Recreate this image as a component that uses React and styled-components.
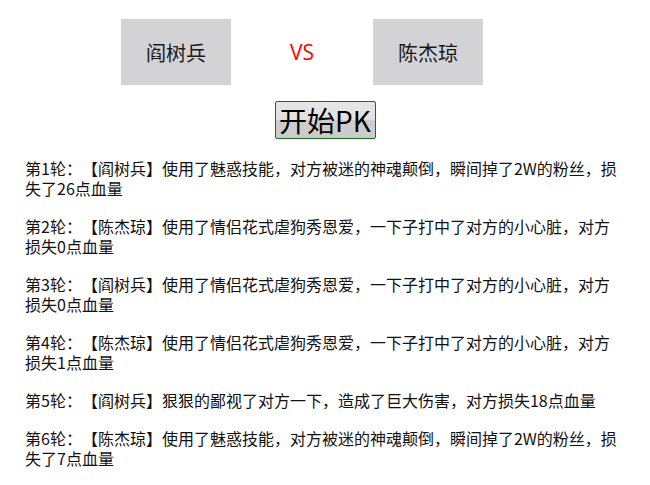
import React from "react";
import styled, { createGlobalStyle } from "styled-components";

const GlobalStyle = createGlobalStyle`
  body {
    margin: 0;
    background: #fff;
    font-family: "Noto Sans CJK SC", "Noto Sans", sans-serif;
    color: #111;
    text-spacing-trim: space-all;
  }
`;

const Page = styled.div`
  width: 600px;
  margin: 0 auto;
  padding-top: 19px;
`;

const Arena = styled.div`
  display: flex;
  align-items: center;
  gap: 58px;
  padding-left: 96px;
`;

const Player = styled.div`
  width: 110px;
  height: 66px;
  background: #d3d3d6;
  display: flex;
  align-items: center;
  justify-content: center;
  font-size: 20px;
  color: #1a1a1a;
`;

const Versus = styled.span`
  color: #ff0000;
  font-family: "Open Sans", "Noto Sans", sans-serif;
  font-size: 21px;
  width: 26px;
  text-align: center;
`;

const StartRow = styled.div`
  display: flex;
  justify-content: center;
  padding-top: 16px;
`;

const StartButton = styled.button`
  width: 101px;
  height: 38px;
  padding: 0;
  border: 1px solid #1d6b1d;
  border-radius: 2px;
  background: linear-gradient(#e6e6e6 0%, #e0e0e0 50%, #cdcdcd 51%, #cbcbcb 100%);
  font-family: "Noto Sans CJK SC", sans-serif;
  font-size: 28px;
  line-height: 34px;
  color: #000;
  display: flex;
  align-items: center;
  justify-content: center;
  text-spacing-trim: space-all;
`;

const Log = styled.div`
  padding-top: 19px;
`;

const Round = styled.p`
  margin: 0 0 18px;
  font-size: 16px;
  line-height: 20px;
`;

const rounds = [
  "第1轮：【阎树兵】使用了魅惑技能，对方被迷的神魂颠倒，瞬间掉了2W的粉丝，损失了26点血量",
  "第2轮：【陈杰琼】使用了情侣花式虐狗秀恩爱，一下子打中了对方的小心脏，对方损失0点血量",
  "第3轮：【阎树兵】使用了情侣花式虐狗秀恩爱，一下子打中了对方的小心脏，对方损失0点血量",
  "第4轮：【陈杰琼】使用了情侣花式虐狗秀恩爱，一下子打中了对方的小心脏，对方损失1点血量",
  "第5轮：【阎树兵】狠狠的鄙视了对方一下，造成了巨大伤害，对方损失18点血量",
  "第6轮：【陈杰琼】使用了魅惑技能，对方被迷的神魂颠倒，瞬间掉了2W的粉丝，损失了7点血量",
];

function App() {
  return (
    <React.Fragment>
      <GlobalStyle />
      <Page>
        <Arena>
          <Player>阎树兵</Player>
          <Versus>VS</Versus>
          <Player>陈杰琼</Player>
        </Arena>
        <StartRow>
          <StartButton>开始PK</StartButton>
        </StartRow>
        <Log>
          {rounds.map((text, i) => (
            <Round key={i}>{text}</Round>
          ))}
        </Log>
      </Page>
    </React.Fragment>
  );
}

export default App;
